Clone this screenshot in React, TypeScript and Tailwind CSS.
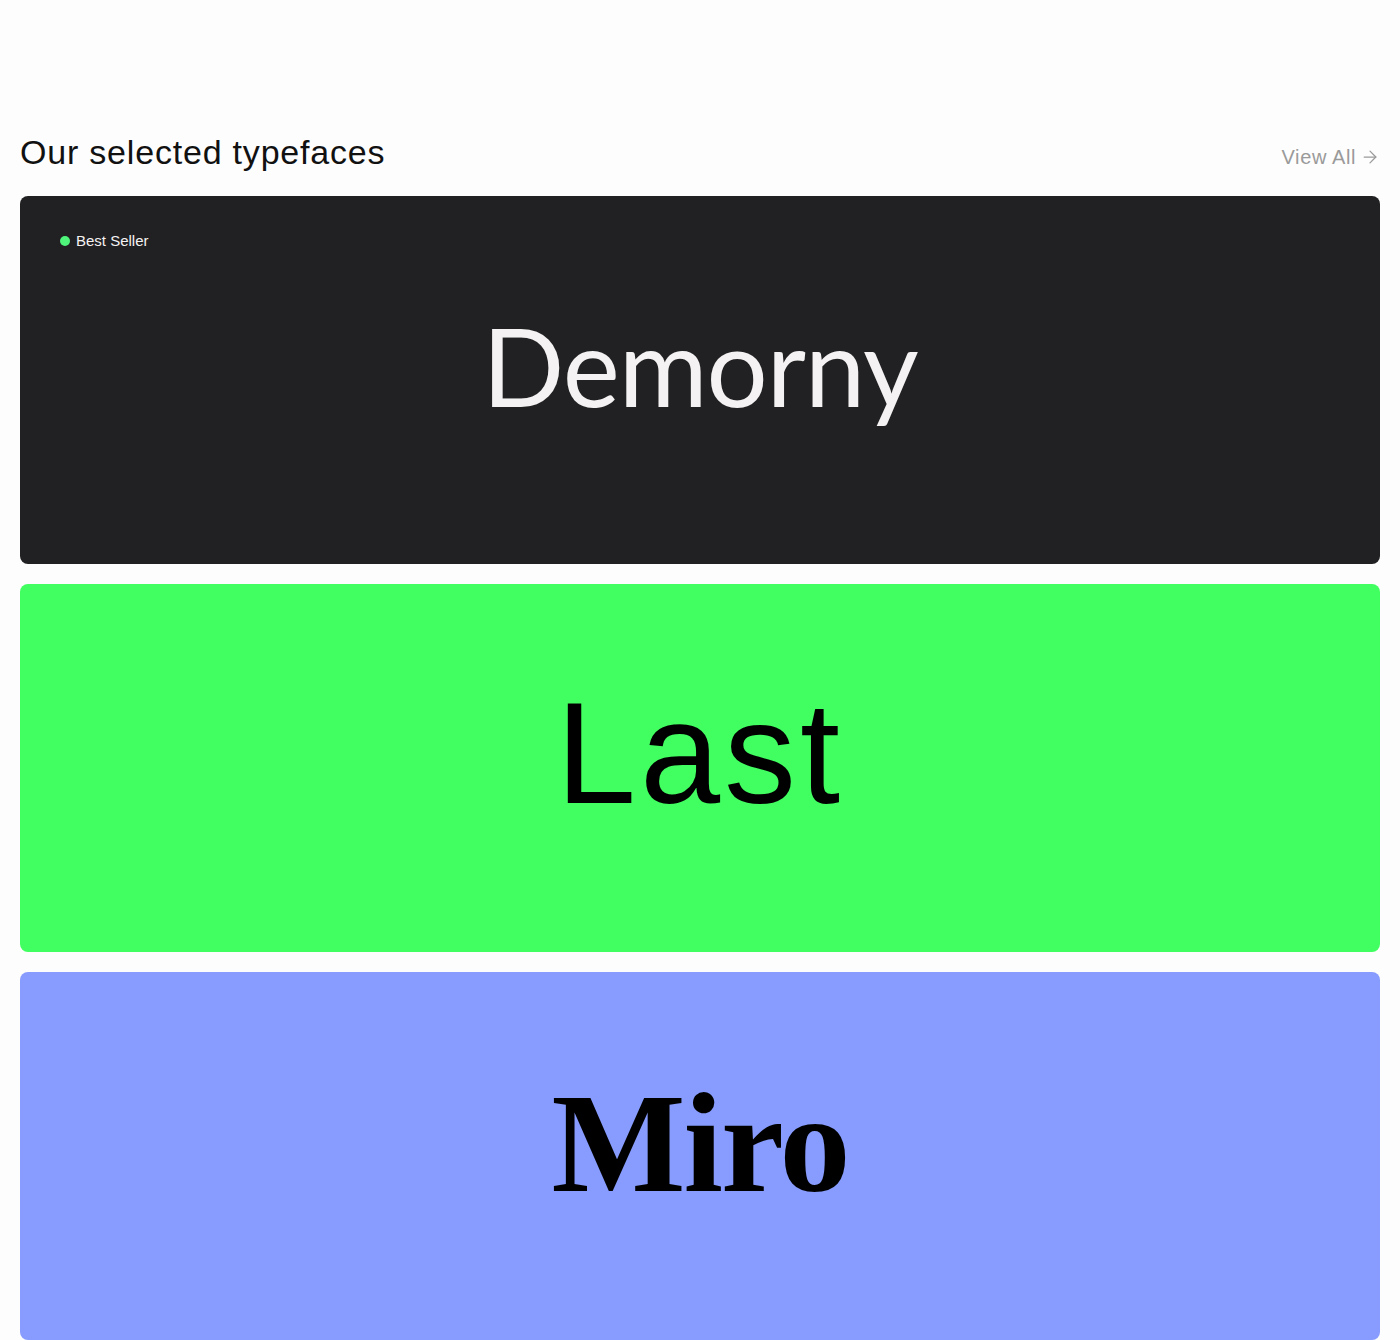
import { ArrowRight } from "lucide-react";

const fonts = [
  {
    name: "Demorny",
    card: "bg-[#212022] text-[#f4f2f2]",
    type: "font-['Lato',sans-serif] text-[108px] font-normal tracking-[-1px] mb-[30px]",
    badge: true,
  },
  {
    name: "Last",
    card: "bg-[#41ff60] text-black",
    type: "font-['Liberation_Sans',sans-serif] text-[144px] font-normal tracking-[4px] mb-[28px]",
    badge: false,
  },
  {
    name: "Miro",
    card: "bg-[#879cfe] text-black",
    type: "font-['Liberation_Serif',serif] text-[142px] font-bold tracking-[-2px] mb-[26px]",
    badge: false,
  },
];

export default function App() {
  return (
    <div className="min-h-screen bg-[#fdfdfd] px-5 pt-[130px] font-['Liberation_Sans',sans-serif]">
      <div className="flex items-end justify-between pb-[22px]">
        <h2 className="text-[34px] leading-[44px] text-[#111] tracking-[0.8px]">Our selected typefaces</h2>
        <a href="#" className="flex items-center gap-1 pb-[2px] text-[20px] tracking-[0.6px] text-[#9a9a9a]">
          View All
          <ArrowRight className="h-[20px] w-[20px]" strokeWidth={1.5} />
        </a>
      </div>
      <div className="flex flex-col gap-5">
        {fonts.map((f) => (
          <div key={f.name} className={`relative flex h-[368px] items-center justify-center rounded-lg ${f.card}`}>
            {f.badge && (
              <div className="absolute left-10 top-[34px] flex items-center gap-[6px] text-[15px]">
                <span className="h-[10px] w-[10px] rounded-full bg-[#4ef57a]" />
                Best Seller
              </div>
            )}
            <span className={`leading-none ${f.type}`}>{f.name}</span>
          </div>
        ))}
      </div>
    </div>
  );
}
